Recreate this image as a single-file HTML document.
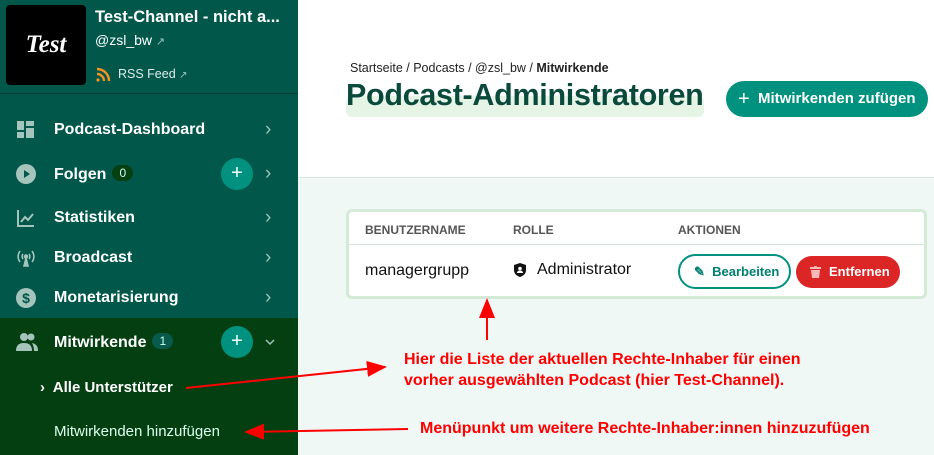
<!DOCTYPE html>
<html><head><meta charset="utf-8"><style>
*{margin:0;padding:0;box-sizing:border-box}
body{width:934px;height:455px;overflow:hidden;font-family:"Liberation Sans",sans-serif;background:#fff;position:relative}
.sb{position:absolute;left:0;top:0;width:298px;height:455px;background:#00574a;color:#fff}
.sb2{position:absolute;left:0;top:318px;width:298px;height:137px;background:#033f10}
.thumb{position:absolute;left:6px;top:5px;width:80px;height:80px;background:#000;border-radius:4px;color:#fff;font-family:"Liberation Serif",serif;font-style:italic;font-weight:bold;font-size:25px;text-align:center;line-height:80px}
.hr{position:absolute;left:0;top:93px;width:298px;height:1px;background:#003a30}
.it{position:absolute;left:54px;font-weight:bold;font-size:16px}
.chev{position:absolute;left:265px;color:#9dc4bb;font-size:19px;line-height:20px}
.ic{position:absolute;left:16px;width:20px;height:20px}
.plus{position:absolute;left:221px;width:32px;height:32px;border-radius:50%;background:#00927f;color:#fff;text-align:center;line-height:31px;font-size:20px}
.badge{display:inline-block;border-radius:9px;font-size:12px;padding:1px 7px;margin-left:6px;vertical-align:2px;font-weight:normal}
.main{position:absolute;left:298px;top:0;width:636px;height:455px}
.red{color:#f00;font-weight:bold;font-size:16px;position:absolute}
</style></head><body>
<div class="sb">
 <div class="thumb">Test</div>
 <div style="position:absolute;left:95px;top:8px;font-weight:bold;font-size:16.5px">Test-Channel - nicht a...</div>
 <div style="position:absolute;left:95px;top:32px;font-size:14px">@zsl_bw <span style="color:#9dc4bb;font-size:11px">↗</span></div>
 <svg style="position:absolute;left:96px;top:67px" width="15" height="15" viewBox="0 0 15 15" fill="none" stroke="#f7931e" stroke-width="2.4"><circle cx="2" cy="13" r="1.6" fill="#f7931e" stroke="none"/><path d="M1 7a7 7 0 017 7M1 2a12 12 0 0112 12"/></svg>
 <div style="position:absolute;left:118px;top:67px;font-size:12.5px;color:#e0ece9">RSS Feed <span style="color:#9dc4bb;font-size:10px">↗</span></div>
 <div class="hr"></div>
 <svg class="ic" style="top:120px" viewBox="0 0 20 20" fill="#a5c4bc"><rect x="1" y="1" width="7" height="9"/><rect x="10" y="1" width="8" height="5"/><rect x="1" y="12" width="7" height="6"/><rect x="10" y="8" width="8" height="10"/></svg>
 <div class="it" style="top:121px">Podcast-Dashboard</div><div class="chev" style="top:120px">›</div>
 <svg class="ic" style="top:164px" viewBox="0 0 20 20"><circle cx="10" cy="10" r="10" fill="#a5c4bc"/><path d="M8 6l6 4-6 4z" fill="#00574a"/></svg>
 <div class="it" style="top:165px">Folgen<span class="badge" style="background:#063f10;color:#cfe">0</span></div>
 <div class="plus" style="top:158px">+</div><div class="chev" style="top:164px">›</div>
 <svg class="ic" style="top:208px" viewBox="0 0 20 20" fill="none" stroke="#a5c4bc" stroke-width="2"><path d="M2 2v16h16M5 14l4-5 3 3 5-6"/></svg>
 <div class="it" style="top:209px">Statistiken</div><div class="chev" style="top:208px">›</div>
 <svg class="ic" style="top:248px" viewBox="0 0 20 20" fill="none" stroke="#a5c4bc" stroke-width="1.6"><path d="M4 3a9 9 0 000 11M16 3a9 9 0 010 11M7 6a4 4 0 000 5M13 6a4 4 0 010 5"/><circle cx="10" cy="8.5" r="1.5" fill="#a5c4bc"/><path d="M10 10l-2 8h4z" fill="#a5c4bc"/></svg>
 <div class="it" style="top:249px">Broadcast</div><div class="chev" style="top:248px">›</div>
 <svg class="ic" style="top:288px" viewBox="0 0 20 20"><circle cx="10" cy="10" r="10" fill="#a5c4bc"/><text x="10" y="15" font-size="14" font-weight="bold" text-anchor="middle" fill="#00574a" font-family="Liberation Sans">$</text></svg>
 <div class="it" style="top:289px">Monetarisierung</div><div class="chev" style="top:288px">›</div>
</div>
<div class="sb2"></div>
<div style="position:absolute;left:0;top:318px;width:298px;height:137px;color:#fff">
 <svg class="ic" style="top:14px;width:22px" viewBox="0 0 22 20" fill="#a5c4bc"><circle cx="8" cy="5" r="4"/><path d="M0 19c0-6 3-8 8-8s8 2 8 8z"/><circle cx="15" cy="5" r="3.5"/><path d="M16 11c4 1 6 3 6 8h-4c0-4-1-6-2-8z"/></svg>
 <div class="it" style="top:15px">Mitwirkende<span class="badge" style="background:#075a4c;color:#cfe">1</span></div>
 <div class="plus" style="top:8px">+</div>
 <svg style="position:absolute;left:265px;top:20px" width="10" height="8" viewBox="0 0 10 8" fill="none" stroke="#9dc4bb" stroke-width="1.5"><path d="M1 2l4 4 4-4"/></svg>
 <div style="position:absolute;left:40px;top:61px;font-weight:bold;font-size:15px">›&nbsp; Alle Unterstützer</div>
 <div style="position:absolute;left:54px;top:105px;font-size:15px;color:#dfe">Mitwirkenden hinzufügen</div>
</div>
<div class="main">
 <div style="position:absolute;left:0;top:177px;width:636px;height:278px;background:#f0f8f6;border-top:1px solid #d3e9dc"></div>
 <div style="position:absolute;left:52px;top:61px;font-size:12.5px;color:#222">Startseite / Podcasts / @zsl_bw / <b>Mitwirkende</b></div>
 <div style="position:absolute;left:48px;top:96px;width:358px;height:21px;background:#e6f4e6;border-radius:6px"></div>
 <div style="position:absolute;left:48px;top:78px;font-size:30.5px;font-weight:bold;color:#0a4a3c;letter-spacing:-0.3px">Podcast-Administratoren</div>
 <div style="position:absolute;left:428px;top:81px;width:202px;height:36px;border-radius:18px;background:#00927f;color:#fff;font-size:15px;font-weight:bold;line-height:36px;padding-left:12px"><span style="font-weight:normal;font-size:20px;vertical-align:-2px">+</span>&nbsp; Mitwirkenden zufügen</div>
 <div style="position:absolute;left:48px;top:209px;width:581px;height:90px;background:#fff;border:3px solid #d4ead6;border-radius:6px">
  <div style="position:absolute;left:16px;top:11px;font-size:12px;font-weight:bold;color:#555">BENUTZERNAME</div>
  <div style="position:absolute;left:164px;top:11px;font-size:12px;font-weight:bold;color:#555">ROLLE</div>
  <div style="position:absolute;left:329px;top:11px;font-size:12px;font-weight:bold;color:#555">AKTIONEN</div>
  <div style="position:absolute;left:0;top:32px;width:575px;height:1px;background:#d4ead6"></div>
  <div style="position:absolute;left:16px;top:50px;font-size:16px;color:#111">managergrupp</div>
  <svg style="position:absolute;left:165px;top:51px" width="12" height="14" viewBox="0 0 12 14"><path d="M6 0l6 2v5c0 4-3 6-6 7-3-1-6-3-6-7V2z" fill="#111"/><circle cx="6" cy="5.5" r="1.8" fill="#fff"/><path d="M2.8 10c.5-2 1.6-2.5 3.2-2.5s2.7.5 3.2 2.5z" fill="#fff"/></svg>
  <div style="position:absolute;left:188px;top:49px;font-size:16px;color:#111">Administrator</div>
  <div style="position:absolute;left:329px;top:42px;width:113px;height:35px;border:2px solid #00927f;border-radius:18px;color:#00806f;font-size:13px;font-weight:bold;line-height:31px;padding-left:14px">✎&nbsp; Bearbeiten</div>
  <div style="position:absolute;left:447px;top:44px;width:104px;height:32px;background:#dc2626;border-radius:16px;color:#fff;font-size:13px;font-weight:bold;line-height:32px;padding-left:33px">Entfernen</div>
  <svg style="position:absolute;left:461px;top:54px" width="11" height="12" viewBox="0 0 11 12" fill="#f6b8b8"><rect x="0" y="1" width="11" height="2"/><rect x="4" y="0" width="3" height="2"/><path d="M1 4h9l-1 8H2z"/></svg>
 </div>
</div>
<div class="red" style="left:404px;top:349px;line-height:21px">Hier die Liste der aktuellen Rechte-Inhaber für einen<br>vorher ausgewählten Podcast (hier Test-Channel).</div>
<div class="red" style="left:420px;top:420px">Menüpunkt um weitere Rechte-Inhaber:innen hinzuzufügen</div>
<svg style="position:absolute;left:0;top:0" width="934" height="455">
 <defs><marker id="a" markerWidth="10" markerHeight="8" refX="9" refY="4" orient="auto"><path d="M0 0L10 4 0 8z" fill="#f00"/></marker></defs>
 <g stroke="#f00" stroke-width="2" marker-end="url(#a)">
  <line x1="487" y1="340" x2="487" y2="300"/>
  <line x1="186" y1="388" x2="385" y2="367"/>
  <line x1="408" y1="429" x2="246" y2="432"/>
 </g>
</svg>
</body></html>
